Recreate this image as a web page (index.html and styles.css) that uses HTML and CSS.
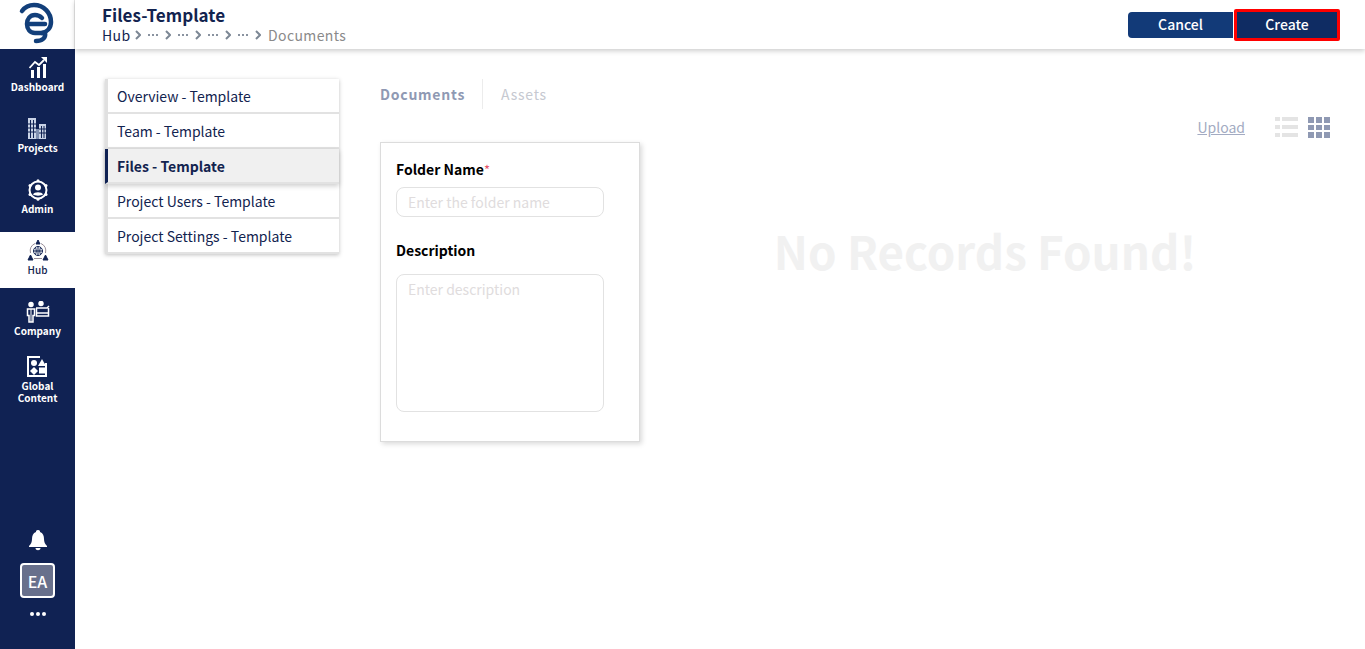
FILE: index.html
```html
<!DOCTYPE html>
<html lang="en" dir="ltr">
<head>
  <meta charset="UTF-8" />
  <meta name="viewport" content="width=device-width, initial-scale=1.0"/>
  <title>Files-Template</title>
  <link rel="stylesheet" href="styles.css">
</head>
<body>

<div class="sidebar">
  <div class="logo">
    <svg width="74" height="49" viewBox="0 0 74 49" fill="none" stroke="#123f7a" stroke-width="4.500" stroke-linecap="round">
      <path d="M22 11C25 7 30 5 34 5C44 5 51 13 51 22C51 28 47 32 42 33"/>
      <path d="M45 33C46 38 42 41 36 41"/>
      <path d="M42 18C40 16 38 15 35 15C30 15 27 19 27 24C27 29 30 33 35 33H43"/>
      <path d="M29 24H45"/>
    </svg>
  </div>
  <div class="nav">
    <div class="nav-item">
      <svg width="18" height="21" viewBox="0 0 18 21" fill="#fff">
        <rect x="2" y="13" width="3" height="8"/><rect x="8" y="10" width="3" height="11"/><rect x="14" y="7" width="3" height="14"/>
        <path d="M0.500 11L6 5L10 8L15 3" fill="none" stroke="#fff" stroke-width="1.800"/><path d="M12 0H18V6Z"/>
      </svg>
      <span>Dashboard</span>
    </div>
    <div class="nav-item">
      <svg width="19" height="21" viewBox="0 0 19 21" fill="#c9d3e6">
        <path d="M0 0H8V21H0Z"/><path d="M8 11H11V21H8Z" fill="#7f8fb0"/><path d="M11 6H18V21H11Z"/>
        <path d="M2.500 2V20M5.500 2V20M13.500 8V20M16 8V20" stroke="#102253" stroke-width="1"/>
        <path d="M0 6H8M0 10H8M0 14H8M11 11H18M11 15H18" stroke="#102253" stroke-width="1"/>
      </svg>
      <span>Projects</span>
    </div>
    <div class="nav-item big-icon">
      <svg width="22" height="22" viewBox="0 0 22 22" fill="none">
        <circle cx="11" cy="11" r="8.500" stroke="#fff" stroke-width="2"/>
        <circle cx="11" cy="1.800" r="1.500" fill="#fff"/><circle cx="11" cy="20.200" r="1.500" fill="#fff"/>
        <circle cx="3" cy="6.500" r="1.500" fill="#fff"/><circle cx="19" cy="6.500" r="1.500" fill="#fff"/>
        <circle cx="3" cy="15.500" r="1.500" fill="#fff"/><circle cx="19" cy="15.500" r="1.500" fill="#fff"/>
        <circle cx="11" cy="8.500" r="3" fill="#fff"/><path d="M6 15.500C7 12.500 15 12.500 16 15.500C14 17 8 17 6 15.500Z" fill="#fff"/>
      </svg>
      <span>Admin</span>
    </div>
    <div class="nav-item active">
      <svg width="22" height="21" viewBox="0 0 22 21" fill="none" stroke="#102253" stroke-width="1">
        <path d="M3.500 13A8.500 8.500 0 0 1 8 3.500M14 3.500A8.500 8.500 0 0 1 18.500 13M7 18.500H15" stroke="#9a8f9a"/>
        <circle cx="11" cy="11" r="4.500"/><path d="M6.500 11H15.500M11 6.500V15.500M8.500 7.500C9.500 10 9.500 12 8.500 14.500M13.500 7.500C12.500 10 12.500 12 13.500 14.500"/>
        <path d="M11 0L13 4H9ZM3.500 15L6 20H1ZM18.500 15L21 20H16Z" fill="#102253"/>
      </svg>
      <span>Hub</span>
    </div>
    <div class="nav-item big-icon">
      <svg width="24" height="22" viewBox="0 0 24 22" fill="none" stroke="#fff" stroke-width="1.500">
        <circle cx="5" cy="3.500" r="2" fill="#fff"/><path d="M1.500 8H8.500V14.500H7V21H3V14.500H1.500Z"/>
        <path d="M5 8V21" stroke-width="1"/>
        <circle cx="15" cy="2.500" r="2" fill="#fff"/><path d="M10 7H21L23 5M10.500 7V15H22.500V7"/>
        <path d="M10.500 12H22.500"/>
      </svg>
      <span>Company</span>
    </div>
    <div class="nav-item tall">
      <svg width="21" height="21" viewBox="0 0 21 21" fill="#fff">
        <path d="M0 0H13V2H2V19H18V7H20V21H0Z"/><circle cx="7" cy="7" r="3"/><path d="M15 3L19 10H11Z"/>
        <path d="M7 11L11 15L7 19L3 15Z"/><rect x="12" y="11.500" width="6" height="6"/>
      </svg>
      <span>Global<br>Content</span>
    </div>
  </div>
  <div class="side-bottom">
    <svg width="18" height="21" viewBox="0 0 18 21" fill="#fff">
      <path d="M9 0C11 0 11 1 11 2C14 3 15 6 15 9C15 12 16 14 18 16V17H0V16C2 14 3 12 3 9C3 6 4 3 7 2C7 1 7 0 9 0Z"/>
      <path d="M6.500 18H11.500C11.500 21 6.500 21 6.500 18Z"/>
    </svg>
    <div class="avatar">EA</div>
    <div class="dots"><i></i><i></i><i></i></div>
  </div>
</div>

<div class="page">
  <div class="topbar">
    <div class="heading">
      <h1>Files-Template</h1>
      <div class="crumbs">
        <span class="crumb-first">Hub</span>
        <svg class="chev" width="6" height="10" viewBox="0 0 6 10"><path d="M1 1L5 5L1 9"/></svg>
        <span class="ellipsis"><i></i><i></i><i></i></span>
        <svg class="chev" width="6" height="10" viewBox="0 0 6 10"><path d="M1 1L5 5L1 9"/></svg>
        <span class="ellipsis"><i></i><i></i><i></i></span>
        <svg class="chev" width="6" height="10" viewBox="0 0 6 10"><path d="M1 1L5 5L1 9"/></svg>
        <span class="ellipsis"><i></i><i></i><i></i></span>
        <svg class="chev" width="6" height="10" viewBox="0 0 6 10"><path d="M1 1L5 5L1 9"/></svg>
        <span class="ellipsis"><i></i><i></i><i></i></span>
        <svg class="chev" width="6" height="10" viewBox="0 0 6 10"><path d="M1 1L5 5L1 9"/></svg>
        <span class="crumb-last">Documents</span>
      </div>
    </div>
    <div class="actions">
      <button class="btn btn-cancel">Cancel</button>
      <button class="btn btn-create">Create</button>
    </div>
  </div>

  <div class="content">
    <div class="menu">
      <div class="menu-item">Overview - Template</div>
      <div class="menu-item">Team - Template</div>
      <div class="menu-item selected">Files - Template</div>
      <div class="menu-item">Project Users - Template</div>
      <div class="menu-item">Project Settings - Template</div>
    </div>

    <div class="files">
      <div class="tabs">
        <div class="tab current">Documents</div>
        <div class="tab">Assets</div>
      </div>
      <div class="toolbar">
        <a class="upload">Upload</a>
        <svg width="23" height="21" viewBox="0 0 23 21" fill="#e4e4e4">
          <rect width="5" height="4"/><rect x="7" width="16" height="4"/>
          <rect y="8" width="5" height="4"/><rect x="7" y="8" width="16" height="4"/>
          <rect y="16" width="5" height="4"/><rect x="7" y="16" width="16" height="4"/>
        </svg>
        <svg width="22" height="21" viewBox="0 0 22 21" fill="#8f99b3">
          <rect width="6" height="6"/><rect x="8" width="6" height="6"/><rect x="16" width="6" height="6"/>
          <rect y="8" width="6" height="5"/><rect x="8" y="8" width="6" height="5"/><rect x="16" y="8" width="6" height="5"/>
          <rect y="15" width="6" height="6"/><rect x="8" y="15" width="6" height="6"/><rect x="16" y="15" width="6" height="6"/>
        </svg>
      </div>
      <div class="files-body">
        <div class="form-card">
          <label>Folder Name<sup>*</sup></label>
          <input type="text" placeholder="Enter the folder name"/>
          <label class="second">Description</label>
          <textarea placeholder="Enter description"></textarea>
        </div>
        <div class="empty">No Records Found!</div>
      </div>
    </div>
  </div>
</div>

</body>
</html>
```

FILE: styles.css
```css
* {
  box-sizing: border-box;
}
body {
  margin: 0;
  height: 649px;
  overflow: hidden;
  display: flex;
  font-family: "Noto Sans CJK JP", "Noto Sans", sans-serif;
  background: #fff;
  color: #12234f;
}
.sidebar {
  width: 75px;
  flex-shrink: 0;
  display: flex;
  flex-direction: column;
  background: #102253;
}
.logo {
  height: 49px;
  background: #fff;
  border-right: 1px solid #e6e6e6;
  display: flex;
}
.nav {
  display: flex;
  flex-direction: column;
  gap: 5px;
}
.nav-item {
  height: 56px;
  display: flex;
  flex-direction: column;
  align-items: center;
  padding-top: 8px;
  color: #fff;
  font-size: 10px;
  font-weight: 700;
  line-height: 12px;
  text-align: center;
}
.nav-item span {
  margin-top: 3px;
}
.nav-item.big-icon span {
  margin-top: 2px;
}
.nav-item.active {
  background: #fff;
  color: #12234f;
  font-weight: 500;
}
.nav-item.tall {
  padding-top: 2px;
}
.side-bottom {
  margin-top: auto;
  display: flex;
  flex-direction: column;
  align-items: center;
  padding-bottom: 33px;
}
.avatar {
  width: 35px;
  height: 35px;
  margin-top: 12px;
  border: 2px solid #fff;
  border-radius: 4px;
  background: #68708c;
  color: #fff;
  font-size: 16px;
  font-weight: 500;
  display: flex;
  justify-content: center;
  align-items: center;
}
.dots {
  display: flex;
  gap: 2px;
  margin-top: 14px;
}
.dots i {
  width: 4px;
  height: 4px;
  border-radius: 50%;
  background: #fff;
}
.page {
  flex: 1;
  min-width: 0;
  display: flex;
  flex-direction: column;
}
.topbar {
  height: 49px;
  display: flex;
  justify-content: space-between;
  align-items: center;
  padding: 0 25px 0 27px;
  background: #fff;
  box-shadow: 0 2px 5px rgba(0,0,0,0.2);
}
.heading {
  padding-top: 1px;
}
h1 {
  margin: 0;
  font-size: 17px;
  font-weight: 700;
  line-height: 20px;
  letter-spacing: 0.05px;
  color: #12234f;
}
.crumbs {
  display: flex;
  align-items: center;
  font-size: 14px;
  line-height: 20px;
  letter-spacing: 0.4px;
  color: #8a8a8a;
}
.crumb-first {
  color: #12234f;
  width: 27px;
}
.chev {
  margin: 0 6px;
  fill: none;
  stroke: #7c8794;
  stroke-width: 2;
}
.ellipsis {
  display: flex;
  gap: 2px;
  width: 12px;
  margin: 0 -1px 0 1px;
}
.ellipsis i {
  width: 2px;
  height: 2px;
  background: #8a93a0;
}
.crumb-last {
  margin-left: 1px;
}
.actions {
  display: flex;
  align-items: center;
}
.btn {
  height: 26px;
  width: 105px;
  border: none;
  color: #fff;
  font-family: inherit;
  font-size: 14px;
  font-weight: 500;
  padding: 0 0 1px;
}
.btn-cancel {
  background: #123a78;
  border-radius: 4px 0 0 4px;
  margin-right: 1px;
}
.btn-create {
  width: 106px;
  height: 32px;
  background: #0f2c63;
  border: 3px solid #f00;
  border-radius: 2px;
}
.content {
  flex: 1;
  display: flex;
  align-items: flex-start;
  padding: 30px 35px 0 30px;
}
.menu {
  width: 234px;
  flex-shrink: 0;
  border-left: 3px solid #e0e0e0;
  box-shadow: 0 1px 4px rgba(0,0,0,0.25);
}
.menu-item {
  height: 35px;
  display: flex;
  align-items: center;
  padding: 1px 0 0 9px;
  border-bottom: 2px solid #e2e2e2;
  font-size: 14px;
  color: #12234f;
  background: #fff;
}
.menu-item.selected {
  position: relative;
  margin-left: -3px;
  border-left: 3px solid #102253;
  background: #f0f0f0;
  font-weight: 700;
  padding-left: 9px;
  box-shadow: 0 2px 5px rgba(0,0,0,0.2);
}
.files {
  flex: 1;
  margin-left: 41px;
}
.tabs {
  display: flex;
  align-items: center;
  height: 30px;
}
.tab {
  font-size: 14px;
  letter-spacing: 0.75px;
  color: #c6c9d1;
  padding-left: 18px;
}
.tab.current {
  padding: 0 17px 0 0;
  line-height: 30px;
  font-weight: 700;
  color: #8f99b3;
  border-right: 1px solid #ececec;
}
.toolbar {
  display: flex;
  justify-content: flex-end;
  align-items: center;
  gap: 10px;
  height: 22px;
  margin-top: 7px;
}
.upload {
  margin-right: 20px;
  font-size: 14px;
  color: #a3abc2;
  text-decoration: underline;
}
.files-body {
  display: flex;
  margin-top: 4px;
}
.form-card {
  width: 260px;
  height: 300px;
  flex-shrink: 0;
  padding: 16px 35px 0 15px;
  border: 1px solid #dcdcdc;
  box-shadow: 2px 2px 5px rgba(0,0,0,0.15);
  display: flex;
  flex-direction: column;
}
label {
  font-size: 14px;
  font-weight: 700;
  line-height: 20px;
  color: #000;
}
label sup {
  color: #e5556a;
  font-size: 13px;
  font-weight: 400;
  line-height: 0;
  vertical-align: 0;
}
label.second {
  margin-top: 23px;
}
input, textarea {
  display: block;
  width: 208px;
  border: 1px solid #e2e2e2;
  border-radius: 8px;
  padding: 0 11px;
  font-family: inherit;
  font-size: 14px;
  resize: none;
  outline: none;
}
input {
  height: 30px;
  margin-top: 8px;
}
textarea {
  height: 138px;
  margin-top: 14px;
  padding-top: 4px;
}
input::placeholder, textarea::placeholder {
  color: #e0dcdd;
  opacity: 1;
}
.empty {
  flex: 1;
  text-align: center;
  margin-top: 78px;
  font-size: 45.700px;
  font-weight: 700;
  line-height: 60px;
  color: #f1f1f1;
}
```
